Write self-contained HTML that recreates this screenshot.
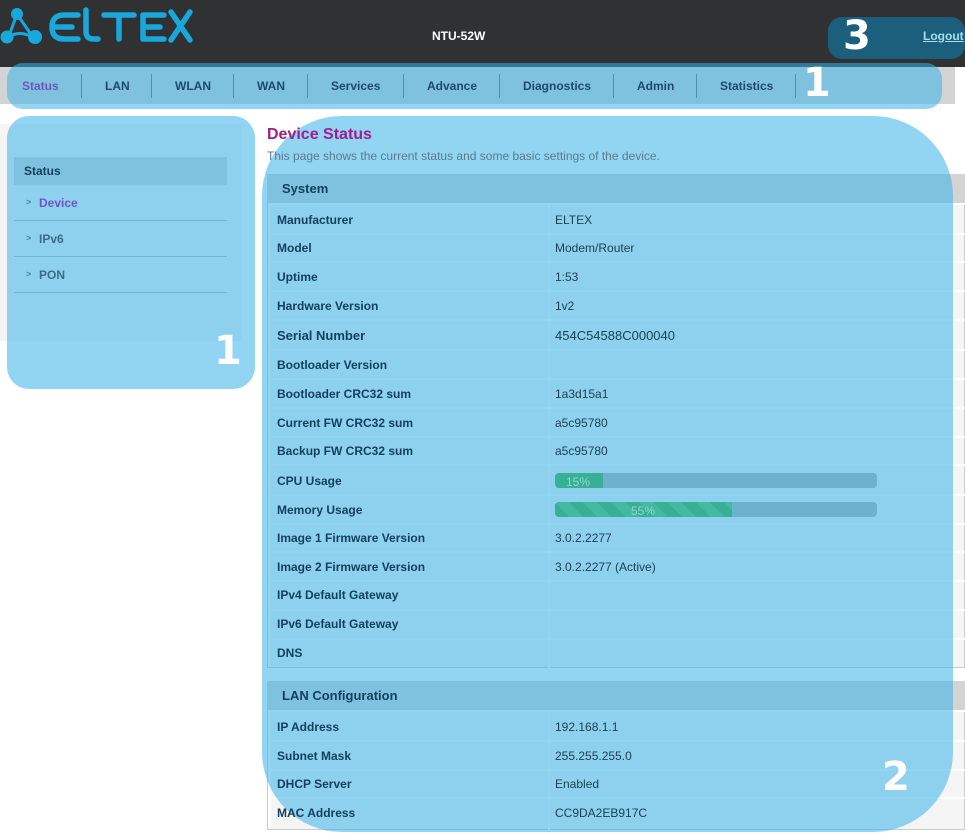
<!DOCTYPE html>
<html><head><meta charset="utf-8"><style>
*{margin:0;padding:0;box-sizing:border-box}
body{width:965px;height:840px;overflow:hidden;background:#fff;font-family:"Liberation Sans",Arial,sans-serif;position:relative}
.abs{position:absolute}
.t{position:absolute;z-index:3;white-space:nowrap}
.ov{position:absolute;z-index:2;background:rgba(56,178,232,0.55)}
.lbl{font-size:12px;font-weight:bold;color:#12405e}
.val{font-size:12px;color:#1a3e55}
.nav{font-size:12px;font-weight:bold;color:#1d4a6a;top:79px}
.sep{position:absolute;z-index:3;top:74px;width:1px;height:24px;background:#4f8fb0}
.rl{position:absolute;left:268px;width:697px;height:2px;background:#fff}
.big{font-size:42px;font-weight:bold;color:#fff;font-family:"DejaVu Sans",sans-serif}
</style></head><body>
<div class="abs" style="left:0;top:0;width:965px;height:67px;background:#303133"></div>
<div class="abs" style="left:0;top:67px;width:955px;height:37px;background:#d4d4d4"></div>
<svg class="abs" style="left:0;top:0;z-index:3" width="200" height="50" viewBox="0 0 200 50">
<g fill="#18a8dc"><circle cx="17" cy="14" r="6"/><circle cx="7" cy="37" r="6.5"/><circle cx="35" cy="37" r="7"/></g>
<g stroke="#18a8dc" stroke-width="3" fill="none" stroke-linecap="round"><path d="M17 14 L10 33 M17 14 L30 33 M10 36 Q20 31 30 36"/></g>
<g stroke="#18a8dc" stroke-width="5.5" fill="none" stroke-linecap="round" stroke-linejoin="round">
<path d="M78 15 H64 Q52 15 52 27 Q52 39 64 39 H78 M54 27 H72"/>
<path d="M86 10 V32 Q86 39 94 39 H98"/>
<path d="M104 15 H134 M119 15 V39"/>
<path d="M164 15 H143 V39 H164 M145 27 H160"/>
<path d="M171 12 L190 40 M190 12 L171 40"/></g>
<text x="60" y="30" font-size="1" fill="#303133">ELTEX</text>
</svg>
<div class="t" style="left:432px;top:29px;color:#fff;font-size:12px;font-weight:bold">NTU-52W</div>
<div class="abs" style="left:828px;top:17px;width:137px;height:42px;border-radius:14px;background:#1b5f7c;z-index:2"></div>
<div class="t big" style="left:843px;top:13px;font-size:40px">3</div>
<div class="t" style="left:923px;top:29px;color:#a8dcf5;font-size:12px;font-weight:bold;text-decoration:underline">Logout</div>
<div class="ov" style="left:7px;top:63px;width:935px;height:46px;border-radius:16px"></div>
<div class="t nav" style="left:22px;color:#7055c0">Status</div>
<div class="t nav" style="left:105px">LAN</div>
<div class="t nav" style="left:175px">WLAN</div>
<div class="t nav" style="left:257px">WAN</div>
<div class="t nav" style="left:331px">Services</div>
<div class="t nav" style="left:427px">Advance</div>
<div class="t nav" style="left:523px">Diagnostics</div>
<div class="t nav" style="left:637px">Admin</div>
<div class="t nav" style="left:720px">Statistics</div>
<div class="sep" style="left:81px"></div><div class="sep" style="left:151px"></div><div class="sep" style="left:233px"></div><div class="sep" style="left:307px"></div><div class="sep" style="left:403px"></div><div class="sep" style="left:499px"></div><div class="sep" style="left:613px"></div><div class="sep" style="left:696px"></div><div class="sep" style="left:795px"></div>
<div class="t big" style="left:803px;top:60px;font-size:40px">1</div>
<div class="abs" style="left:0;top:124px;width:242px;height:217px;background:#f5f5f5"></div>
<div class="abs" style="left:14px;top:157px;width:213px;height:28px;background:#d4d4d4"></div>
<div class="abs" style="left:14px;top:220px;width:213px;height:1px;background:#bbb"></div>
<div class="abs" style="left:14px;top:256px;width:213px;height:1px;background:#bbb"></div>
<div class="abs" style="left:14px;top:292px;width:213px;height:1px;background:#bbb"></div>
<div class="ov" style="left:7px;top:116px;width:248px;height:273px;border-radius:22px"></div>
<div class="t lbl" style="left:24px;top:164px">Status</div>
<div class="t" style="left:26px;top:197px;font-size:9px;color:#2a5a78">&gt;</div><div class="t" style="left:39px;top:196px;font-size:12px;font-weight:bold;color:#7055c0">Device</div>
<div class="t" style="left:26px;top:233px;font-size:9px;color:#2a5a78">&gt;</div><div class="t" style="left:39px;top:232px;font-size:12px;font-weight:bold;color:#3a6d8a">IPv6</div>
<div class="t" style="left:26px;top:269px;font-size:9px;color:#2a5a78">&gt;</div><div class="t" style="left:39px;top:268px;font-size:12px;font-weight:bold;color:#3a6d8a">PON</div>
<div class="t big" style="left:214px;top:328px;font-size:40px">1</div>
<div class="t" style="left:267px;top:126px;font-size:16px;font-weight:bold;color:#a01e8c">Device Status</div>
<div class="t" style="left:267px;top:149px;font-size:12px;color:#5a7a90">This page shows the current status and some basic settings of the device.</div>
<div class="abs" style="left:267px;top:174px;width:698px;height:29px;background:#d4d4d4"></div>
<div class="abs" style="left:267px;top:203px;width:698px;height:465px;background:#f5f5f5;border:1px solid #ccc"></div>
<div class="abs" style="left:548px;top:203px;width:2px;height:465px;background:#fff"></div>
<div class="abs" style="left:267px;top:681px;width:698px;height:29px;background:#d4d4d4"></div>
<div class="abs" style="left:267px;top:710px;width:698px;height:120px;background:#f5f5f5;border:1px solid #ccc"></div>
<div class="abs" style="left:548px;top:710px;width:2px;height:120px;background:#fff"></div>
<div class="abs" style="left:268px;top:203px;width:3px;height:464px;background:#fff"></div>
<div class="abs" style="left:268px;top:710px;width:3px;height:118px;background:#fff"></div>
<div class="rl" style="top:203px"></div><div class="rl" style="top:233px"></div><div class="rl" style="top:261px"></div><div class="rl" style="top:290px"></div><div class="rl" style="top:319px"></div><div class="rl" style="top:349px"></div><div class="rl" style="top:378px"></div><div class="rl" style="top:407px"></div><div class="rl" style="top:436px"></div><div class="rl" style="top:464px"></div><div class="rl" style="top:494px"></div><div class="rl" style="top:523px"></div><div class="rl" style="top:551px"></div><div class="rl" style="top:580px"></div><div class="rl" style="top:609px"></div><div class="rl" style="top:638px"></div>
<div class="rl" style="top:710px"></div><div class="rl" style="top:740px"></div><div class="rl" style="top:769px"></div><div class="rl" style="top:797px"></div>
<div class="abs" style="left:555px;top:473px;width:322px;height:15px;border-radius:4px;background:#b0b0b0"></div>
<div class="abs" style="left:555px;top:473px;width:48px;height:15px;border-radius:4px 0 0 4px;background:#35ad31"></div>
<div class="abs" style="left:555px;top:502px;width:322px;height:15px;border-radius:4px;background:#b0b0b0"></div>
<div class="abs" style="left:555px;top:502px;width:177px;height:15px;border-radius:4px 0 0 4px;background:repeating-linear-gradient(45deg,#35ad31 0 10px,#4ec04a 10px 20px)"></div>
<div class="ov" style="left:262px;top:116px;width:691px;height:716px;border-radius:80px"></div>
<div class="t" style="left:566px;top:475px;font-size:12px;color:#8fd6d0">15%</div>
<div class="t" style="left:631px;top:504px;font-size:12px;color:#8fd6d0">55%</div>
<div class="t lbl" style="left:282px;top:181px;font-size:13px">System</div>
<div class="t lbl" style="left:282px;top:688px;font-size:13px">LAN Configuration</div>
<div class="t lbl" style="left:277px;top:213px">Manufacturer</div><div class="t val" style="left:555px;top:213px">ELTEX</div>
<div class="t lbl" style="left:277px;top:241px">Model</div><div class="t val" style="left:555px;top:241px">Modem/Router</div>
<div class="t lbl" style="left:277px;top:270px">Uptime</div><div class="t val" style="left:555px;top:270px">1:53</div>
<div class="t lbl" style="left:277px;top:299px">Hardware Version</div><div class="t val" style="left:555px;top:299px">1v2</div>
<div class="t lbl" style="left:277px;top:328px;font-size:13px">Serial Number</div><div class="t val" style="left:555px;top:328px;font-size:13px">454C54588C000040</div>
<div class="t lbl" style="left:277px;top:358px">Bootloader Version</div>
<div class="t lbl" style="left:277px;top:387px">Bootloader CRC32 sum</div><div class="t val" style="left:555px;top:387px">1a3d15a1</div>
<div class="t lbl" style="left:277px;top:416px">Current FW CRC32 sum</div><div class="t val" style="left:555px;top:416px">a5c95780</div>
<div class="t lbl" style="left:277px;top:444px">Backup FW CRC32 sum</div><div class="t val" style="left:555px;top:444px">a5c95780</div>
<div class="t lbl" style="left:277px;top:474px">CPU Usage</div>
<div class="t lbl" style="left:277px;top:503px">Memory Usage</div>
<div class="t lbl" style="left:277px;top:531px">Image 1 Firmware Version</div><div class="t val" style="left:555px;top:531px">3.0.2.2277</div>
<div class="t lbl" style="left:277px;top:560px">Image 2 Firmware Version</div><div class="t val" style="left:555px;top:560px">3.0.2.2277 (Active)</div>
<div class="t lbl" style="left:277px;top:588px">IPv4 Default Gateway</div>
<div class="t lbl" style="left:277px;top:617px">IPv6 Default Gateway</div>
<div class="t lbl" style="left:277px;top:646px">DNS</div>
<div class="t lbl" style="left:277px;top:720px">IP Address</div><div class="t val" style="left:555px;top:720px">192.168.1.1</div>
<div class="t lbl" style="left:277px;top:749px">Subnet Mask</div><div class="t val" style="left:555px;top:749px">255.255.255.0</div>
<div class="t lbl" style="left:277px;top:777px">DHCP Server</div><div class="t val" style="left:555px;top:777px">Enabled</div>
<div class="t lbl" style="left:277px;top:806px">MAC Address</div><div class="t val" style="left:555px;top:806px">CC9DA2EB917C</div>
<div class="t big" style="left:882px;top:754px;font-size:40px">2</div>
</body></html>
